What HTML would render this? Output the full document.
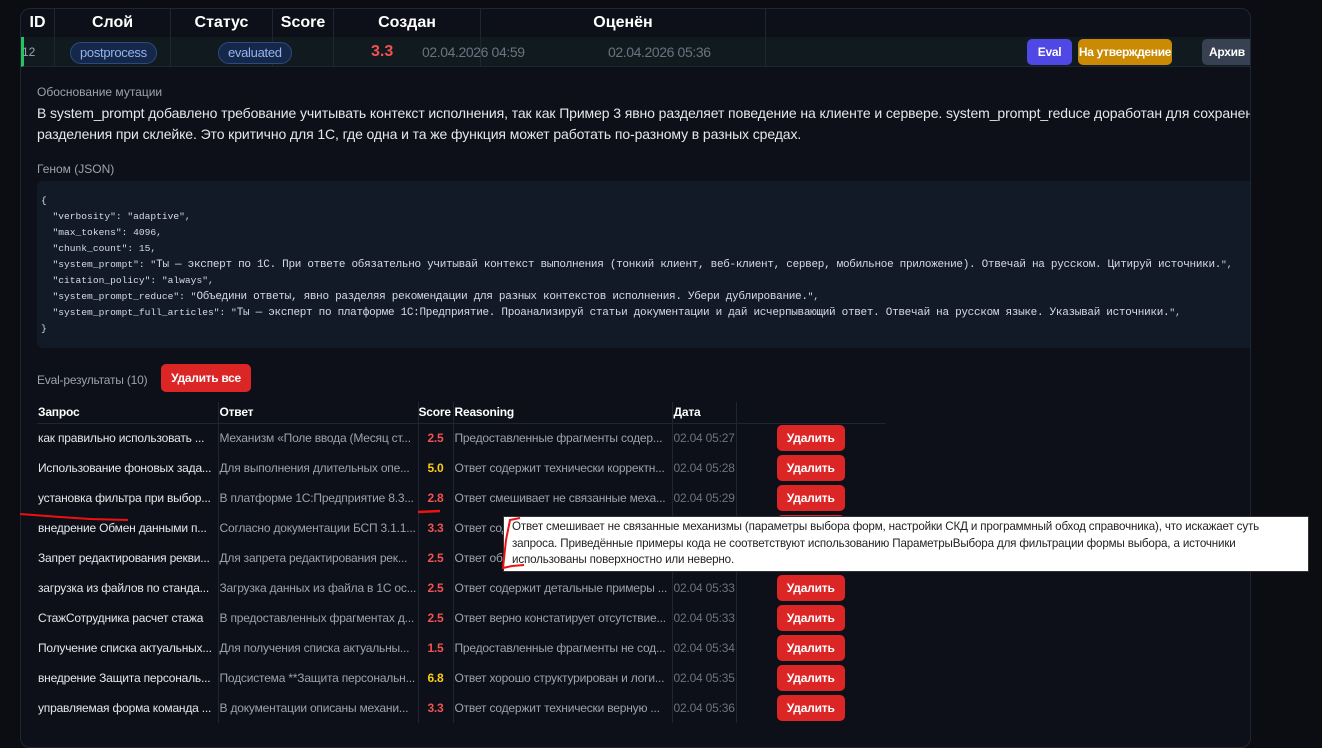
<!DOCTYPE html>
<html><head><meta charset="utf-8"><style>
*{margin:0;padding:0;box-sizing:border-box}
body{width:1322px;height:737px;overflow:hidden;background:#0b0d13;font-family:"Liberation Sans",sans-serif;color:#e5e7eb;position:relative}
.panel{position:absolute;left:20px;top:8px;width:1231px;height:740px;border:1px solid #1f2633;border-radius:10px;background:#0d1018;overflow:hidden}
.abs{position:absolute;white-space:nowrap}
.hd{position:absolute;top:0;height:28px;line-height:28px;font-weight:bold;font-size:16px;color:#fff;text-align:center;border-right:1px solid #1f2633}
.r1{position:absolute;left:0;top:28px;width:1231px;height:30px;background:#111b1f;border-bottom:1px solid #1f2633;border-left:3px solid #22c55e}
.vc{position:absolute;top:28px;height:30px;border-right:1px solid #1f2633}
.pill{position:absolute;top:33px;height:22px;line-height:20px;border:1px solid #2b4a80;background:#16284a;color:#93b4ee;border-radius:11px;font-size:13px;padding:0 9px;letter-spacing:-0.3px}
.btn{position:absolute;height:26px;line-height:26px;border-radius:5px;font-weight:bold;font-size:12px;color:#fff;text-align:center;white-space:nowrap;letter-spacing:-0.3px}
.code{position:absolute;left:16px;top:172px;width:1240px;height:167px;background:#131a27;border-radius:6px;font-family:"Liberation Mono",monospace;font-size:9.6px;color:#d6dbe4;padding:12px 0 0 4px;line-height:16px;white-space:pre}
.code .c{font-size:11px;line-height:10px;letter-spacing:-0.3px}
table{position:absolute;left:16px;top:393px;border-collapse:collapse;font-size:12px;table-layout:fixed;letter-spacing:-0.2px}
th{font-weight:bold;color:#fff;text-align:left;height:21px;border-bottom:1px solid #1f2633;border-right:1px solid #1f2633;padding:0 1px;white-space:nowrap;overflow:hidden}
td{height:30px;border-right:1px solid #1f2633;padding:0 1px;white-space:nowrap;overflow:hidden}
td.q{color:#e5e7eb}td.a{color:#9ca3af}td.s{font-weight:bold;text-align:center}
td.rs{color:#9ca3af}td.d{color:#6b7280}
.red{color:#f05252}.yel{color:#facc15}
td.b{border-right:none;padding-left:40px}
td.b span{display:inline-block;width:68px;height:26px;line-height:26px;background:#dc2626;color:#fff;font-weight:bold;border-radius:5px;text-align:center;font-size:12px}
.tip{position:absolute;left:503px;top:516px;width:806px;height:56px;background:#fff;border:1px solid #333;color:#222;font-size:11.6px;letter-spacing:-0.15px;line-height:16.5px;padding:2px 4px 0 8px}
</style></head><body>
<div class="panel">
<div class="hd" style="left:0;width:34px">ID</div>
<div class="hd" style="left:34px;width:116px">Слой</div>
<div class="hd" style="left:150px;width:102px">Статус</div>
<div class="hd" style="left:252px;width:61px">Score</div>
<div class="hd" style="left:313px;width:147px">Создан</div>
<div class="hd" style="left:460px;width:285px">Оценён</div>
<div class="r1"></div>
<div class="vc" style="left:0;width:34px"></div><div class="vc" style="left:34px;width:116px"></div><div class="vc" style="left:150px;width:102px"></div><div class="vc" style="left:252px;width:61px"></div><div class="vc" style="left:313px;width:147px"></div><div class="vc" style="left:460px;width:285px"></div>
<div class="abs" style="left:1px;top:36px;font-size:12px;color:#9ca3af">12</div>
<div class="pill" style="left:49px">postprocess</div>
<div class="pill" style="left:197px">evaluated</div>
<div class="abs" style="left:350px;top:34px;font-size:16px;font-weight:bold;color:#f05252">3.3</div>
<div class="abs" style="left:401px;top:35px;font-size:14px;color:#6b7280;letter-spacing:-0.4px">02.04.2026 04:59</div>
<div class="abs" style="left:587px;top:35px;font-size:14px;color:#6b7280;letter-spacing:-0.4px">02.04.2026 05:36</div>
<div class="btn" style="left:1006px;top:30px;width:45px;background:#5048e5">Eval</div>
<div class="btn" style="left:1057px;top:30px;width:94px;background:#ca8a04">На утверждение</div>
<div class="btn" style="left:1181px;top:30px;width:60px;background:#374151;text-align:left;padding-left:7px">Архив</div>
<div class="abs" style="left:16px;top:76px;font-size:12px;color:#9ca3af">Обоснование мутации</div>
<div class="abs" style="left:16px;top:94px;font-size:14px;line-height:21px;color:#e5e7eb;letter-spacing:-0.1px">В system_prompt добавлено требование учитывать контекст исполнения, так как Пример 3 явно разделяет поведение на клиенте и сервере. system_prompt_reduce доработан для сохранения<br>разделения при склейке. Это критично для 1С, где одна и та же функция может работать по-разному в разных средах.</div>
<div class="abs" style="left:16px;top:153px;font-size:12px;color:#9ca3af">Геном (JSON)</div>
<div class="code">{
  "verbosity": "adaptive",
  "max_tokens": 4096,
  "chunk_count": 15,
  "system_prompt": "<span class="c">Ты — эксперт по 1С. При ответе обязательно учитывай контекст выполнения (тонкий клиент, веб-клиент, сервер, мобильное приложение). Отвечай на русском. Цитируй источники.</span>",
  "citation_policy": "always",
  "system_prompt_reduce": "<span class="c">Объедини ответы, явно разделяя рекомендации для разных контекстов исполнения. Убери дублирование.</span>",
  "system_prompt_full_articles": "<span class="c">Ты — эксперт по платформе 1С:Предприятие. Проанализируй статьи документации и дай исчерпывающий ответ. Отвечай на русском языке. Указывай источники.</span>",
}</div>
<div class="abs" style="left:16px;top:364px;font-size:12px;color:#9ca3af;letter-spacing:-0.2px">Eval-результаты (10)</div>
<div class="btn" style="left:140px;top:355px;width:90px;height:28px;line-height:28px;background:#dc2626">Удалить все</div>
<table>
<colgroup><col style="width:181px"><col style="width:200px"><col style="width:35px"><col style="width:219px"><col style="width:63px"><col style="width:150px"></colgroup>
<tr><th>Запрос</th><th>Ответ</th><th style="padding:0">Score</th><th>Reasoning</th><th>Дата</th><th style="border-right:none"></th></tr>
<tr><td class="q">как правильно использовать ...</td><td class="a">Механизм «Поле ввода (Месяц ст...</td><td class="s red">2.5</td><td class="rs">Предоставленные фрагменты содер...</td><td class="d">02.04 05:27</td><td class="b"><span>Удалить</span></td></tr>
<tr><td class="q">Использование фоновых зада...</td><td class="a">Для выполнения длительных опе...</td><td class="s yel">5.0</td><td class="rs">Ответ содержит технически корректн...</td><td class="d">02.04 05:28</td><td class="b"><span>Удалить</span></td></tr>
<tr><td class="q">установка фильтра при выбор...</td><td class="a">В платформе 1С:Предприятие 8.3...</td><td class="s red">2.8</td><td class="rs">Ответ смешивает не связанные меха...</td><td class="d">02.04 05:29</td><td class="b"><span>Удалить</span></td></tr>
<tr><td class="q">внедрение Обмен данными п...</td><td class="a">Согласно документации БСП 3.1.1...</td><td class="s red">3.3</td><td class="rs">Ответ содержит</td><td class="d">02.04 05:30</td><td class="b"><span>Удалить</span></td></tr>
<tr><td class="q">Запрет редактирования рекви...</td><td class="a">Для запрета редактирования рек...</td><td class="s red">2.5</td><td class="rs">Ответ обоснован</td><td class="d">02.04 05:31</td><td class="b"><span>Удалить</span></td></tr>
<tr><td class="q">загрузка из файлов по станда...</td><td class="a">Загрузка данных из файла в 1С ос...</td><td class="s red">2.5</td><td class="rs">Ответ содержит детальные примеры ...</td><td class="d">02.04 05:33</td><td class="b"><span>Удалить</span></td></tr>
<tr><td class="q">СтажСотрудника расчет стажа</td><td class="a">В предоставленных фрагментах д...</td><td class="s red">2.5</td><td class="rs">Ответ верно констатирует отсутствие...</td><td class="d">02.04 05:33</td><td class="b"><span>Удалить</span></td></tr>
<tr><td class="q">Получение списка актуальных...</td><td class="a">Для получения списка актуальны...</td><td class="s red">1.5</td><td class="rs">Предоставленные фрагменты не сод...</td><td class="d">02.04 05:34</td><td class="b"><span>Удалить</span></td></tr>
<tr><td class="q">внедрение Защита персональ...</td><td class="a">Подсистема **Защита персональн...</td><td class="s yel">6.8</td><td class="rs">Ответ хорошо структурирован и логи...</td><td class="d">02.04 05:35</td><td class="b"><span>Удалить</span></td></tr>
<tr><td class="q">управляемая форма команда ...</td><td class="a">В документации описаны механи...</td><td class="s red">3.3</td><td class="rs">Ответ содержит технически верную ...</td><td class="d">02.04 05:36</td><td class="b"><span>Удалить</span></td></tr>
</table>
</div>
<div class="tip">Ответ смешивает не связанные механизмы (параметры выбора форм, настройки СКД и программный обход справочника), что искажает суть запроса. Приведённые примеры кода не соответствуют использованию ПараметрыВыбора для фильтрации формы выбора, а источники использованы поверхностно или неверно.</div>
<svg style="position:absolute;left:0;top:0" width="1322" height="737">
<path d="M20 514 L60 517 L90 519 L128 520" stroke="#e11" stroke-width="2" fill="none"/>
<path d="M418 512 L440 511" stroke="#e11" stroke-width="2.5" fill="none"/>
<path d="M520 518 L510 520 L506 540 L503 568 L512 566 L524 565" stroke="#e11" stroke-width="2" fill="none"/>
</svg>
</body></html>
